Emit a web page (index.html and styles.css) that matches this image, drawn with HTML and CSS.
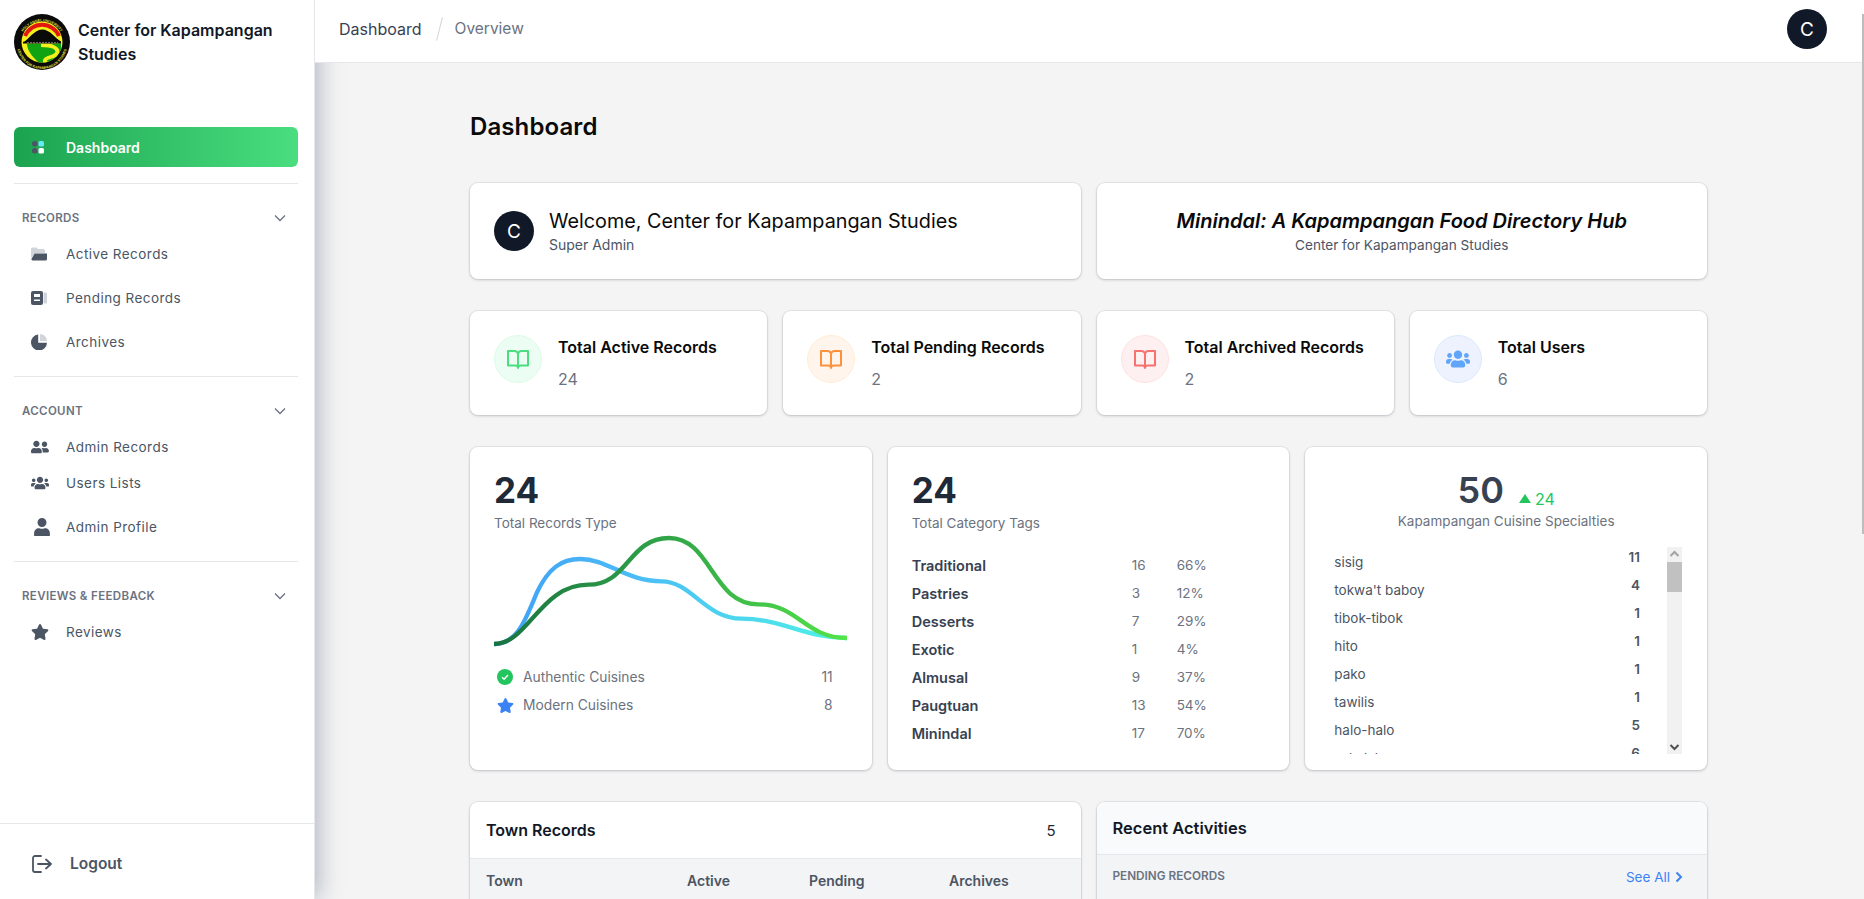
FILE: index.html
```html
<!DOCTYPE html>
<html lang="en">
<head>
<meta charset="utf-8">
<title>Dashboard</title>
<link rel="stylesheet" href="styles.css">
</head>
<body>
<div class="app">
  <aside class="sidebar">
    <div class="brand">
      <svg class="logo" viewBox="0 0 56 56">
        <defs>
          <path id="arcTop" d="M5.500 30a22.500 22.500 0 0 1 45 0"/>
          <path id="arcBot" d="M3 30a25 25 0 0 0 50 0"/>
          <clipPath id="inner"><circle cx="28" cy="28" r="20.500"/></clipPath>
        </defs>
        <circle cx="28" cy="28" r="28" fill="#0b0b0b"/>
        <text class="logo-ring"><textPath href="#arcTop" startOffset="50%" text-anchor="middle">HOLY ANGEL UNIVERSITY</textPath></text>
        <text class="logo-ring"><textPath href="#arcBot" startOffset="50%" text-anchor="middle">CENTER FOR KAPAMPANGAN STUDIES</textPath></text>
        <g clip-path="url(#inner)">
          <rect x="6" y="6" width="44" height="44" fill="#f5f01c"/>
          <path d="M11 22A18.500 18.500 0 0 1 45 22" fill="none" stroke="#e3170f" stroke-width="4"/>
          <path d="M10 28C15 25 20 16 28 15.500C36 15.500 41 24 47 27.500V29H10z" fill="#0a0a0a"/>
          <path d="M13 29.500H47V48A19 19 0 0 1 22 46C16 40 13 35 13 29.500z" fill="#12a312"/>
          <path d="M27 31C38 31 45 34 43 39C41 44 33 42 31 46C30 48 33 50 37 50" fill="none" stroke="#f5f01c" stroke-width="3.800"/>
          <path d="M9 28.700H47" stroke="#0a0a0a" stroke-width="1.800"/>
          <path d="M13 28.700H44" stroke="#f2f2f2" stroke-width=".5" stroke-dasharray="2 1"/>
        </g>
      </svg>
      <div class="brand-name">Center for Kapampangan Studies</div>
    </div>
    <nav class="nav">
      <a class="nav-active">
        <svg class="dash-icon" viewBox="0 0 12 13">
          <rect x="0" y="0" width="5.500" height="5.500" rx="2.500" fill="#4b5563"/>
          <rect x="6.500" y="0" width="5.500" height="5.500" rx="1.500" fill="#67e8f9"/>
          <rect x="0" y="7" width="5.500" height="5.500" rx="2.500" fill="#4b5563"/>
          <rect x="6.500" y="7" width="5.500" height="5.500" rx="1.500" fill="#ffffff"/>
        </svg>
        <span>Dashboard</span>
      </a>
      <div class="divider"></div>

      <div class="group-label group-label-tight"><span>RECORDS</span><svg class="chev" viewBox="0 0 12 8"><path d="M1 1.500l5 5 5-5"/></svg></div>
      <a class="item"><span class="ico"><svg viewBox="0 0 16 14" class="ic16"><path d="M0 2a1.500 1.500 0 0 1 1.500-1.500h4l1.500 1.500h5.500A1.500 1.500 0 0 1 14 3.500V6H4L0 11z" fill="#d1d5db"/><path d="M3.600 6.500H16V12a1.500 1.500 0 0 1-1.500 1.500H1.500A1.500 1.500 0 0 1 .4 12z" fill="#4b5563"/></svg></span><span>Active Records</span></a>
      <a class="item"><span class="ico"><svg viewBox="0 0 16 14" class="ic16"><rect x="12.500" y="1.500" width="3.500" height="11" rx="1" fill="#d1d5db"/><rect x="0" y="0" width="12" height="14" rx="2" fill="#4b5563"/><rect x="3" y="3" width="6" height="3" fill="#fff"/><rect x="3" y="8.500" width="6" height="1.500" fill="#fff"/></svg></span><span>Pending Records</span></a>
      <a class="item"><span class="ico"><svg viewBox="0 0 16 16" class="ic16"><path d="M7.200 .5v8.300H16A8 8 0 1 1 7.200 .5z" fill="#4b5563"/><path d="M9 0a7 7 0 0 1 7 7H9z" fill="#d1d5db"/></svg></span><span>Archives</span></a>
      <div class="divider"></div>

      <div class="group-label"><span>ACCOUNT</span><svg class="chev" viewBox="0 0 12 8"><path d="M1 1.500l5 5 5-5"/></svg></div>
      <a class="item item-sm"><span class="ico"><svg viewBox="0 0 640 512" class="ic18 fill"><path d="M192 256c61.900 0 112-50.100 112-112S253.900 32 192 32 80 82.100 80 144s50.100 112 112 112zm76.800 32h-8.300c-20.800 10-43.900 16-68.500 16s-47.600-6-68.500-16h-8.300C51.600 288 0 339.600 0 403.200V432c0 26.500 21.500 48 48 48h288c26.500 0 48-21.500 48-48v-28.800c0-63.600-51.600-115.200-115.200-115.200zM480 256c53 0 96-43 96-96s-43-96-96-96-96 43-96 96 43 96 96 96zm48 32h-3.800c-13.900 4.800-28.600 8-44.200 8s-30.300-3.200-44.200-8H432c-20.400 0-39.200 5.900-55.700 15.400 24.400 26.300 39.700 61.200 39.700 99.800v38.400c0 2.200-.5 4.300-.6 6.400H592c26.500 0 48-21.500 48-48 0-61.900-50.100-112-112-112z"/></svg></span><span>Admin Records</span></a>
      <a class="item item-sm"><span class="ico"><svg viewBox="0 0 640 512" class="ic18 fill"><path d="M96 224c35.300 0 64-28.700 64-64s-28.700-64-64-64-64 28.700-64 64 28.700 64 64 64zm448 0c35.300 0 64-28.700 64-64s-28.700-64-64-64-64 28.700-64 64 28.700 64 64 64zm32 32h-64c-17.600 0-33.500 7.100-45.100 18.600 40.300 22.100 68.900 62 75.100 109.400h66c17.700 0 32-14.300 32-32v-32c0-35.300-28.700-64-64-64zm-256 0c61.900 0 112-50.100 112-112S381.900 32 320 32 208 82.100 208 144s50.100 112 112 112zm76.800 32h-8.300c-20.800 10-43.900 16-68.500 16s-47.600-6-68.500-16h-8.300C179.600 288 128 339.600 128 403.200V432c0 26.500 21.500 48 48 48h288c26.500 0 48-21.500 48-48v-28.800c0-63.600-51.600-115.200-115.200-115.200zm-223.700-13.400C161.500 263.100 145.600 256 128 256H64c-35.300 0-64 28.700-64 64v32c0 17.700 14.300 32 32 32h65.900c6.300-47.400 34.900-87.300 75.200-109.400z"/></svg></span><span>Users Lists</span></a>
      <a class="item item-gap"><span class="ico"><svg viewBox="0 0 448 512" class="ic18 fill ic-user"><path d="M224 256c70.700 0 128-57.300 128-128S294.700 0 224 0 96 57.300 96 128s57.300 128 128 128zm89.600 32h-16.700c-22.200 10.200-46.900 16-72.900 16s-50.600-5.800-72.900-16h-16.700C60.200 288 0 348.200 0 422.400V512h448v-89.600c0-74.200-60.200-134.400-134.400-134.400z"/></svg></span><span>Admin Profile</span></a>
      <div class="divider"></div>

      <div class="group-label"><span>REVIEWS &amp; FEEDBACK</span><svg class="chev" viewBox="0 0 12 8"><path d="M1 1.500l5 5 5-5"/></svg></div>
      <a class="item item-sm"><span class="ico"><svg viewBox="0 0 576 512" class="ic18 fill"><path d="M259.300 17.800L194 150.200 47.900 171.500c-26.200 3.800-36.700 36.100-17.700 54.600l105.700 103-25 145.500c-4.500 26.300 23.200 46 46.400 33.700L288 439.600l130.700 68.700c23.200 12.200 50.900-7.400 46.400-33.700l-25-145.500 105.700-103c19-18.500 8.500-50.800-17.700-54.600L382 150.200 316.700 17.800c-11.700-23.600-45.600-23.900-57.400 0z"/></svg></span><span>Reviews</span></a>
    </nav>
    <div class="logout">
      <svg class="logout-ic" viewBox="0 0 20 18"><path d="M9 1H3a2 2 0 0 0-2 2v12a2 2 0 0 0 2 2h6M6 9h13M14 4.500L19 9l-5 4.500"/></svg>
      <span>Logout</span>
    </div>
  </aside>

  <div class="main">
    <header class="topbar">
      <div class="crumbs"><span class="crumb-now">Dashboard</span><span class="crumb-sep"></span><span class="crumb-next">Overview</span></div>
      <div class="avatar">C</div>
    </header>
    <div class="page-thumb"></div>
    <main class="content">
      <h1 class="page-title">Dashboard</h1>

      <section class="row-two">
        <div class="card welcome">
          <div class="avatar">C</div>
          <div>
            <div class="welcome-title">Welcome, Center for Kapampangan Studies</div>
            <div class="welcome-sub">Super Admin</div>
          </div>
        </div>
        <div class="card hub">
          <div class="hub-title">Minindal: A Kapampangan Food Directory Hub</div>
          <div class="hub-sub">Center for Kapampangan Studies</div>
        </div>
      </section>

      <section class="row-four">
        <div class="card stat">
          <div class="stat-ic tone-green"><svg viewBox="0 0 24 24" class="book"><path d="M2 4h6.500A3.500 3.500 0 0 1 12 7.500V21a2.500 2.500 0 0 0-2.500-2.500H2zM22 4h-6.500A3.500 3.500 0 0 0 12 7.500V21a2.500 2.500 0 0 1 2.500-2.500H22z"/></svg></div>
          <div><div class="stat-title">Total Active Records</div><div class="stat-val">24</div></div>
        </div>
        <div class="card stat">
          <div class="stat-ic tone-orange"><svg viewBox="0 0 24 24" class="book"><path d="M2 4h6.500A3.500 3.500 0 0 1 12 7.500V21a2.500 2.500 0 0 0-2.500-2.500H2zM22 4h-6.500A3.500 3.500 0 0 0 12 7.500V21a2.500 2.500 0 0 1 2.500-2.500H22z"/></svg></div>
          <div><div class="stat-title">Total Pending Records</div><div class="stat-val">2</div></div>
        </div>
        <div class="card stat">
          <div class="stat-ic tone-red"><svg viewBox="0 0 24 24" class="book"><path d="M2 4h6.500A3.500 3.500 0 0 1 12 7.500V21a2.500 2.500 0 0 0-2.500-2.500H2zM22 4h-6.500A3.500 3.500 0 0 0 12 7.500V21a2.500 2.500 0 0 1 2.500-2.500H22z"/></svg></div>
          <div><div class="stat-title">Total Archived Records</div><div class="stat-val">2</div></div>
        </div>
        <div class="card stat">
          <div class="stat-ic tone-blue"><svg viewBox="0 0 640 512" class="users-ic"><path d="M96 224c35.300 0 64-28.700 64-64s-28.700-64-64-64-64 28.700-64 64 28.700 64 64 64zm448 0c35.300 0 64-28.700 64-64s-28.700-64-64-64-64 28.700-64 64 28.700 64 64 64zm32 32h-64c-17.600 0-33.500 7.100-45.100 18.600 40.300 22.100 68.900 62 75.100 109.400h66c17.700 0 32-14.300 32-32v-32c0-35.300-28.700-64-64-64zm-256 0c61.900 0 112-50.100 112-112S381.900 32 320 32 208 82.100 208 144s50.100 112 112 112zm76.800 32h-8.300c-20.800 10-43.900 16-68.500 16s-47.600-6-68.500-16h-8.300C179.600 288 128 339.600 128 403.200V432c0 26.500 21.500 48 48 48h288c26.500 0 48-21.500 48-48v-28.800c0-63.600-51.600-115.200-115.200-115.200zm-223.700-13.400C161.500 263.100 145.600 256 128 256H64c-35.300 0-64 28.700-64 64v32c0 17.700 14.300 32 32 32h65.900c6.300-47.400 34.900-87.300 75.200-109.400z"/></svg></div>
          <div><div class="stat-title">Total Users</div><div class="stat-val">6</div></div>
        </div>
      </section>

      <section class="row-three">
        <div class="card panel">
          <div class="big">24</div>
          <div class="panel-sub">Total Records Type</div>
          <svg class="chart" viewBox="87 280 1059 345">
            <defs>
              <linearGradient id="gBlue" gradientUnits="userSpaceOnUse" x1="87" y1="0" x2="1146" y2="0">
                <stop offset="0" stop-color="#3f9ff6"/><stop offset=".35" stop-color="#4ab8f7"/><stop offset="1" stop-color="#4ff2e6"/>
              </linearGradient>
              <linearGradient id="gGreen" gradientUnits="userSpaceOnUse" x1="87" y1="0" x2="1146" y2="0">
                <stop offset="0" stop-color="#197341"/><stop offset=".5" stop-color="#31a548"/><stop offset="1" stop-color="#55e44a"/>
              </linearGradient>
            </defs>
            <path class="line" stroke="url(#gBlue)" d="M87 613C150 613 175 560 215 460C250 385 290 358 345 358C430 358 480 425 590 425C680 425 720 537 830 537C950 537 1020 595 1146 595"/>
            <path class="line" stroke="url(#gGreen)" d="M87 613C190 613 225 435 370 435C490 435 490 295 612 295C740 295 740 494 880 494C1000 494 1020 595 1146 595"/>
          </svg>
          <div class="legend">
            <div class="legend-row"><span class="leg-box"><svg viewBox="0 0 16 16" class="leg-ic"><circle cx="8" cy="8" r="8" fill="#22c55e"/><path d="M5 8.200l2.100 2.100L11 6" fill="none" stroke="#fff" stroke-width="1.400"/></svg></span><span class="legend-name">Authentic Cuisines</span><span>11</span></div>
            <div class="legend-row"><span class="leg-box"><svg viewBox="0 0 576 512" class="leg-star"><path d="M259.300 17.800L194 150.200 47.900 171.500c-26.200 3.800-36.700 36.100-17.700 54.600l105.700 103-25 145.500c-4.500 26.300 23.200 46 46.400 33.700L288 439.600l130.700 68.700c23.200 12.200 50.900-7.400 46.400-33.700l-25-145.500 105.700-103c19-18.500 8.500-50.800-17.700-54.600L382 150.200 316.700 17.800c-11.700-23.600-45.600-23.900-57.400 0z"/></svg></span><span class="legend-name">Modern Cuisines</span><span>8</span></div>
          </div>
        </div>

        <div class="card panel">
          <div class="big">24</div>
          <div class="panel-sub">Total Category Tags</div>
          <div class="tags">
            <span class="tag">Traditional</span><span>16</span><span>66%</span>
            <span class="tag">Pastries</span><span>3</span><span>12%</span>
            <span class="tag">Desserts</span><span>7</span><span>29%</span>
            <span class="tag">Exotic</span><span>1</span><span>4%</span>
            <span class="tag">Almusal</span><span>9</span><span>37%</span>
            <span class="tag">Paugtuan</span><span>13</span><span>54%</span>
            <span class="tag">Minindal</span><span>17</span><span>70%</span>
          </div>
        </div>

        <div class="card panel">
          <div class="spec-head">
            <span class="big big-dark">50</span>
            <span class="delta"><svg viewBox="0 0 12 9" class="tri"><path d="M6 0l6 9H0z"/></svg>24</span>
          </div>
          <div class="spec-sub">Kapampangan Cuisine Specialties</div>
          <div class="spec-wrap">
            <div class="spec-list">
              <div class="spec-row"><span class="spec-name">sisig</span><span class="spec-val">11</span></div>
              <div class="spec-row"><span class="spec-name">tokwa't baboy</span><span class="spec-val">4</span></div>
              <div class="spec-row"><span class="spec-name">tibok-tibok</span><span class="spec-val">1</span></div>
              <div class="spec-row"><span class="spec-name">hito</span><span class="spec-val">1</span></div>
              <div class="spec-row"><span class="spec-name">pako</span><span class="spec-val">1</span></div>
              <div class="spec-row"><span class="spec-name">tawilis</span><span class="spec-val">1</span></div>
              <div class="spec-row"><span class="spec-name">halo-halo</span><span class="spec-val">5</span></div>
              <div class="spec-row"><span class="spec-name">sakalab</span><span class="spec-val">6</span></div>
            </div>
            <div class="fake-bar">
              <svg viewBox="0 0 15 15" class="bar-btn"><path d="M3.500 9l4-4 4 4"/></svg>
              <div class="bar-thumb"></div>
              <div class="bar-fill"></div>
              <svg viewBox="0 0 15 15" class="bar-btn bar-btn-down"><path d="M3.500 6l4 4 4-4"/></svg>
            </div>
          </div>
        </div>
      </section>

      <section class="row-two">
        <div class="card table-card">
          <div class="town-head"><span class="card-h">Town Records</span><span class="town-count">5</span></div>
          <div class="town-cols"><span>Town</span><span>Active</span><span>Pending</span><span>Archives</span></div>
        </div>
        <div class="card table-card">
          <div class="recent-head"><span class="card-h recent-h">Recent Activities</span></div>
          <div class="recent-sub"><span class="recent-label">PENDING RECORDS</span><span class="see-all">See All<svg viewBox="0 0 8 12" class="see-chev"><path d="M1.500 1.500L6 6l-4.500 4.500"/></svg></span></div>
        </div>
      </section>
    </main>
  </div>
</div>
</body>
</html>
```

FILE: styles.css
```css
* { box-sizing: border-box; }
html, body { margin: 0; height: 100%; overflow: hidden; }
body { font-family: Inter, "Noto Sans", "Liberation Sans", sans-serif; color: #111827; background: #f4f4f5; font-size: 14px; }
.app { display: flex; height: 100vh; }

/* sidebar */
.sidebar { width: 315px; flex: none; height: 100vh; background: #fff; border-right: 1px solid #e5e7eb; display: flex; flex-direction: column; box-shadow: 4px 0 22px rgba(75, 85, 110, .38); position: relative; z-index: 1; }
.brand { display: flex; align-items: center; gap: 8px; padding: 14px 14px 0; height: 70px; }
.logo { width: 56px; height: 56px; flex: none; }
.logo-ring { font-size: 3.500px; font-weight: 700; fill: #e8e23a; font-family: "Liberation Sans", sans-serif; }
.brand-name { font-size: 16px; line-height: 24px; font-weight: 600; color: #111827; }
.nav { padding: 57px 16px 0 14px; display: flex; flex-direction: column; }
.nav-active { display: flex; align-items: center; height: 40px; padding-left: 18px; gap: 22px; border-radius: 6px; background: linear-gradient(90deg, #1ba34f, #4ade80); color: #fff; font-weight: 600; font-size: 14px; }
.dash-icon { width: 12px; height: 13px; flex: none; }
.divider { height: 1px; background: #e5e7eb; margin: 16px 0 0; }
.nav-active + .divider { margin-bottom: 24px; }
.item + .divider { margin-top: 12px; margin-bottom: 24px; }
.group-label { display: flex; align-items: center; justify-content: space-between; height: 20px; padding: 0 12px 0 8px; margin-bottom: 8px; color: #6b7280; font-size: 11.500px; font-weight: 600; letter-spacing: .35px; }
.group-label-tight { margin-bottom: 4px; }
.chev { width: 12px; height: 8px; fill: none; stroke: #6b7280; stroke-width: 1.300; }
.item { display: flex; align-items: center; height: 44px; color: #4b5563; font-size: 13.500px; letter-spacing: .45px; font-weight: 400; }
.item-sm { height: 36px; }
.item-gap { margin-top: 4px; }
.ico { width: 52px; flex: none; padding-left: 17px; display: flex; align-items: center; }
.ic16 { width: 16px; height: 16px; }
.ic18 { width: 18px; height: 18px; }
.ic-user { margin-left: 2px; }
.fill { fill: #4b5563; }
.logout { margin-top: auto; height: 76px; border-top: 1px solid #e5e7eb; display: flex; align-items: center; gap: 18px; padding: 4px 0 0 32px; font-size: 15.500px; font-weight: 600; color: #4b5563; }
.logout-ic { width: 20px; height: 18px; fill: none; stroke: #4b5563; stroke-width: 1.800; stroke-linecap: round; stroke-linejoin: round; }

/* top */
.main { position: relative; flex: 1; min-width: 0; display: flex; flex-direction: column; overflow: hidden; }
.topbar { position: relative; z-index: 2; flex: none; height: 63px; background: #fff; border-bottom: 1px solid #e5e7eb; display: flex; align-items: center; justify-content: space-between; padding: 0 37px 4px 24px; }
.page-thumb { position: absolute; z-index: 3; top: 14px; right: 0; width: 2px; height: 520px; background: #bdbdbd; }
.crumbs { display: flex; align-items: center; font-size: 16px; margin-top: -1px; }
.crumb-now { color: #374151; }
.crumb-next { color: #6b7280; font-size: 15.500px; }
.crumb-sep { width: 1px; height: 24px; background: #d1d5db; transform: rotate(14deg); margin: 0 15px 0 17px; }
.avatar { width: 40px; height: 40px; border-radius: 50%; background: #111827; color: #fff; display: flex; align-items: center; justify-content: center; font-size: 19px; flex: none; }

.content { width: 1237px; margin-left: 155px; padding-top: 48px; flex: 1; display: flex; flex-direction: column; gap: 32px; }
.page-title { margin: 0 0 8px; font-size: 24px; line-height: 32px; font-weight: 600; letter-spacing: .1px; color: #0a0a0a; }
.card { background: #fff; border-radius: 8px; box-shadow: 0 0 0 1px rgba(17, 24, 39, .05), 0 1px 3px rgba(17, 24, 39, .2); }
.row-two { display: grid; grid-template-columns: 1fr 1fr; gap: 16px; }
.row-four { display: grid; grid-template-columns: repeat(4, 1fr); gap: 16px; }
.row-three { display: grid; grid-template-columns: repeat(3, 1fr); gap: 16px; height: 323px; }

.welcome { height: 96px; display: flex; align-items: center; gap: 15px; padding: 0 24px; }
.welcome-title { font-size: 19.800px; line-height: 28px; color: #0a0a0a; }
.welcome-sub { font-size: 14px; line-height: 20px; color: #4b5563; }
.hub { height: 96px; display: flex; flex-direction: column; align-items: center; justify-content: center; }
.hub-title { font-size: 20px; line-height: 28px; font-weight: 600; font-style: italic; color: #0a0a0a; }
.hub-sub { font-size: 13.600px; line-height: 20px; color: #4b5563; }

.stat { height: 104px; display: flex; gap: 16px; padding: 24px; }
.stat-ic { width: 48px; height: 48px; border-radius: 50%; display: flex; align-items: center; justify-content: center; flex: none; border: 1px solid; }
.book { width: 24px; height: 24px; fill: none; stroke: currentColor; stroke-width: 2; stroke-linejoin: round; }
.users-ic { width: 24px; height: 20px; fill: #60a5fa; }
.tone-green { color: #4ade80; background: #ecfdf3; border-color: #dcfce7; }
.tone-orange { color: #fb923c; background: #fff5ec; border-color: #ffedd5; }
.tone-red { color: #f87171; background: #fef0f0; border-color: #fee2e2; }
.tone-blue { background: #edf2fe; border-color: #dbeafe; }
.stat-title { font-size: 16px; line-height: 24px; font-weight: 600; color: #0a0a0a; }
.stat-val { font-size: 16px; line-height: 24px; margin-top: 8px; color: #6b7280; }

.panel { padding: 23px 24px 0; overflow: hidden; }
.big { display: block; font-size: 35px; line-height: 40px; font-weight: 700; color: #1f2937; }
.big-dark { color: #374151; font-weight: 600; font-size: 36px; }
.panel-sub { margin-top: 3px; font-size: 13.500px; line-height: 20px; color: #6b7280; }
.chart { display: block; width: 353px; height: 115px; }
.line { fill: none; stroke-width: 13; }
.legend { margin-top: 15px; }
.legend-row { display: flex; align-items: center; height: 28px; color: #6b7280; font-size: 13.800px; padding: 0 15px 0 3px; }
.leg-box { width: 17px; flex: none; display: flex; align-items: center; }
.legend-name { flex: 1; margin-left: 9px; }
.leg-ic { width: 16px; height: 16px; }
.leg-star { fill: #3b82f6; width: 17px; height: 17px; }

.tags { margin-top: 18px; display: grid; grid-template-columns: 220px 45px 1fr; grid-auto-rows: 28px; align-items: center; color: #6b7280; font-size: 13.500px; }
.tag { font-weight: 600; font-size: 14.500px; color: #374151; }

.spec-head { display: flex; justify-content: center; align-items: baseline; gap: 15px; }
.delta { display: inline-flex; align-items: center; gap: 4px; font-size: 16px; color: #22c55e; }
.tri { width: 12px; height: 9px; fill: #22c55e; }
.spec-sub { text-align: center; margin-top: 1px; font-size: 13.500px; line-height: 20px; color: #6b7280; }
.spec-wrap { margin-top: 16px; height: 207px; display: flex; overflow: hidden; }
.spec-list { flex: 1; padding: 0 27px 0 5px; }
.spec-row { display: flex; justify-content: space-between; height: 28px; }
.spec-name { margin-top: 5px; line-height: 20px; color: #4b5563; font-size: 13.500px; }
.spec-val { line-height: 20px; font-weight: 600; color: #4b5563; font-size: 13.500px; }
.fake-bar { width: 15px; flex: none; background: #f1f1f1; display: flex; flex-direction: column; margin-right: 1px; }
.bar-btn { width: 15px; height: 15px; flex: none; fill: none; stroke: #a3a3a3; stroke-width: 2; }
.bar-btn-down { stroke: #505050; }
.bar-thumb { height: 30px; background: #c1c1c1; flex: none; }
.bar-fill { flex: 1; }

.table-card { overflow: hidden; height: 200px; }
.town-head { height: 57px; display: flex; align-items: center; justify-content: space-between; padding: 0 25px 0 16px; border-bottom: 1px solid #e5e7eb; }
.card-h { font-size: 16px; font-weight: 600; color: #111827; }
.recent-h { font-size: 16.500px; }
.town-count { font-size: 15px; color: #1f2937; }
.town-cols { display: grid; grid-template-columns: 201px 122px 140px 1fr; height: 143px; padding: 12px 16px; background: #f3f4f6; font-size: 14px; line-height: 20px; font-weight: 600; color: #4b5563; }
.recent-head { height: 53px; display: flex; align-items: center; padding: 0 16px; background: #f9fafb; border-bottom: 1px solid #e5e7eb; }
.recent-sub { height: 147px; display: flex; justify-content: space-between; align-items: flex-start; padding: 12px 24px 0 16px; background: #f3f4f6; }
.recent-label { font-size: 11.750px; line-height: 18px; font-weight: 600; color: #6b7280; }
.see-all { display: inline-flex; align-items: center; gap: 5px; font-size: 13.500px; line-height: 20px; color: #3b82f6; }
.see-chev { width: 8px; height: 12px; fill: none; stroke: #3b82f6; stroke-width: 2; }
```
